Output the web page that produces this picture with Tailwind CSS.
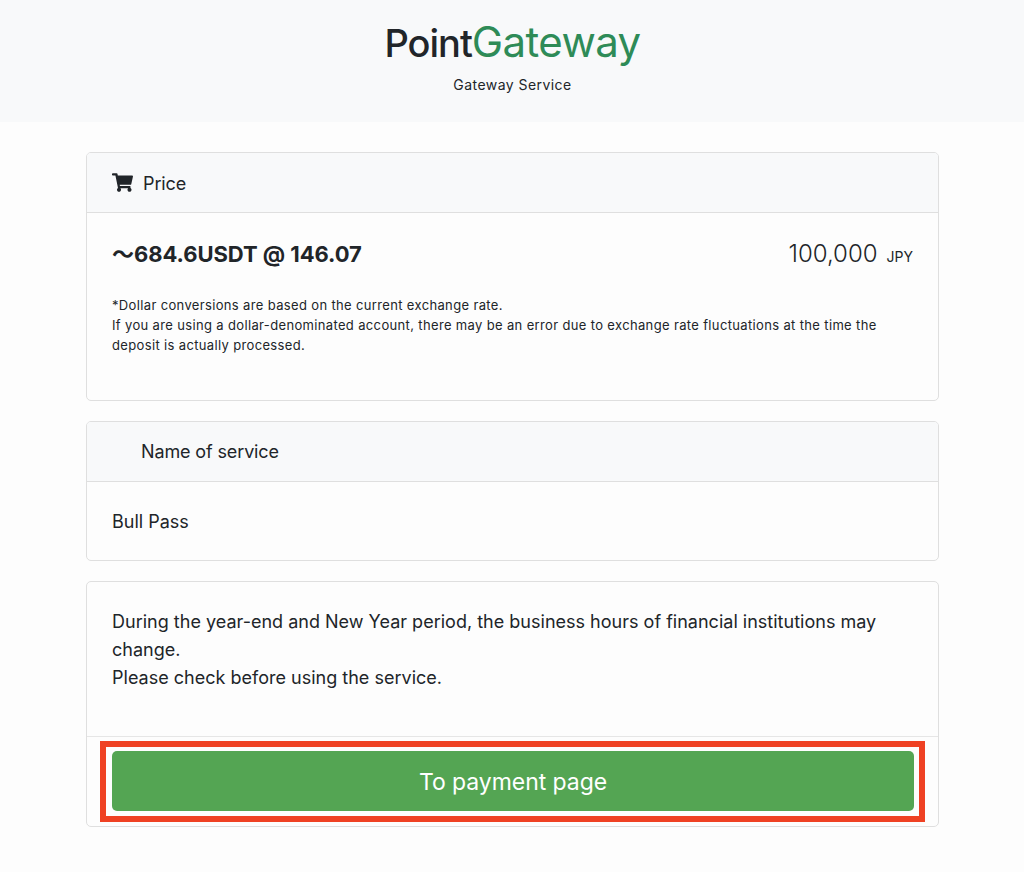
<!DOCTYPE html>
<html lang="en">
<head>
<meta charset="utf-8">
<title>PointGateway</title>
<script src="https://cdn.jsdelivr.net/npm/@tailwindcss/browser@4"></script>
</head>
<body class="bg-[#fdfdfd] text-[#212529] font-['Inter','Liberation_Sans',sans-serif]">
    <!-- header -->
    <header class="h-[122px] bg-[#f8f9fa] flex flex-col items-center pt-[14px]">
        <div class="text-[42px] leading-[56px] tracking-[-0.6px] pl-[1px]"><span class="text-[38px] font-medium tracking-[-1px]">Point</span><span class="text-[#2e8b57]">Gateway</span></div>
        <p class="text-[14px] leading-[21px] mt-[3px] pl-[1px] tracking-[0.45px]">Gateway Service</p>
    </header>

    <main class="mx-[86px] w-[853px] pt-[30px] flex flex-col gap-[20px]">
        <!-- price -->
        <section class="h-[249px] border border-[#dfdfdf] rounded-[5px] overflow-hidden">
            <div class="h-[60px] bg-[#f8f9fa] border-b border-[#dfdfdf] flex items-center pl-[25px] gap-[10px] text-[18px]">
                <svg class="w-[21px] h-[19px]" viewBox="0 0 576 512" fill="currentColor"><path d="M528.12 301.319l47.273-208C578.806 78.301 567.391 64 551.99 64H159.208l-9.166-44.81C147.758 8.021 137.93 0 126.529 0H24C10.745 0 0 10.745 0 24v16c0 13.255 10.745 24 24 24h69.883l70.248 343.435C147.325 417.1 136 435.222 136 456c0 30.928 25.072 56 56 56s56-25.072 56-56c0-15.674-6.447-29.835-16.824-40h209.647C430.447 426.165 424 440.326 424 456c0 30.928 25.072 56 56 56s56-25.072 56-56c0-22.172-12.888-41.332-31.579-50.405l5.517-24.276c3.413-15.018-8.002-29.319-23.403-29.319H218.117l-6.545-32h293.145c11.206 0 20.92-7.754 23.403-18.681z"/></svg>
                <span class="pt-[1px] tracking-[-0.1px]">Price</span>
            </div>
            <div class="px-[25px] pt-[24px]">
                <div class="flex justify-between items-center h-[36px]">
                    <span class="text-[22px] font-bold -mt-[2px] tracking-[-0.05px] font-['Inter','Noto_Sans_CJK_JP',sans-serif]">〜684.6USDT @ 146.07</span>
                    <span class="text-[24px] font-light -mt-[2px]">100,000<span class="text-[14px] font-normal ml-[9px]">JPY</span></span>
                </div>
                <p class="text-[13px] leading-[20px] mt-[22px] tracking-[0.35px]">*Dollar conversions are based on the current exchange rate.<br>If you are using a dollar-denominated account, there may be an error due to exchange rate fluctuations at the time the deposit is actually processed.</p>
            </div>
        </section>

        <!-- service -->
        <section class="h-[140px] border border-[#dfdfdf] rounded-[5px] overflow-hidden">
            <div class="h-[60px] bg-[#f8f9fa] border-b border-[#dfdfdf] flex items-center pl-[54px] text-[18px] tracking-[-0.13px]">Name of service</div>
            <div class="px-[25px] pt-[27px] text-[18px] leading-[25px]">Bull Pass</div>
        </section>

        <!-- notice -->
        <section class="relative h-[246px] border border-[#dfdfdf] rounded-[5px]">
            <div class="h-[155px] border-b border-[#e6e6e6] px-[25px] pt-[26px] text-[18px] leading-[28px] tracking-[0.01px]">
                During the year-end and New Year period, the business hours of financial institutions may change.<br>Please check before using the service.
            </div>
            <div class="pl-[25px] pr-[24px] pt-[14px]">
                <button class="w-full h-[60px] pt-[2px] rounded-[5px] bg-[#54a553] text-white text-[23px] tracking-[-0.06px]">To payment page</button>
            </div>
            <!-- red annotation box -->
            <div class="absolute left-[13px] right-[13px] top-[159px] h-[81px] border-[6px] border-[#ef4123]"></div>
        </section>
    </main>
</body>
</html>
